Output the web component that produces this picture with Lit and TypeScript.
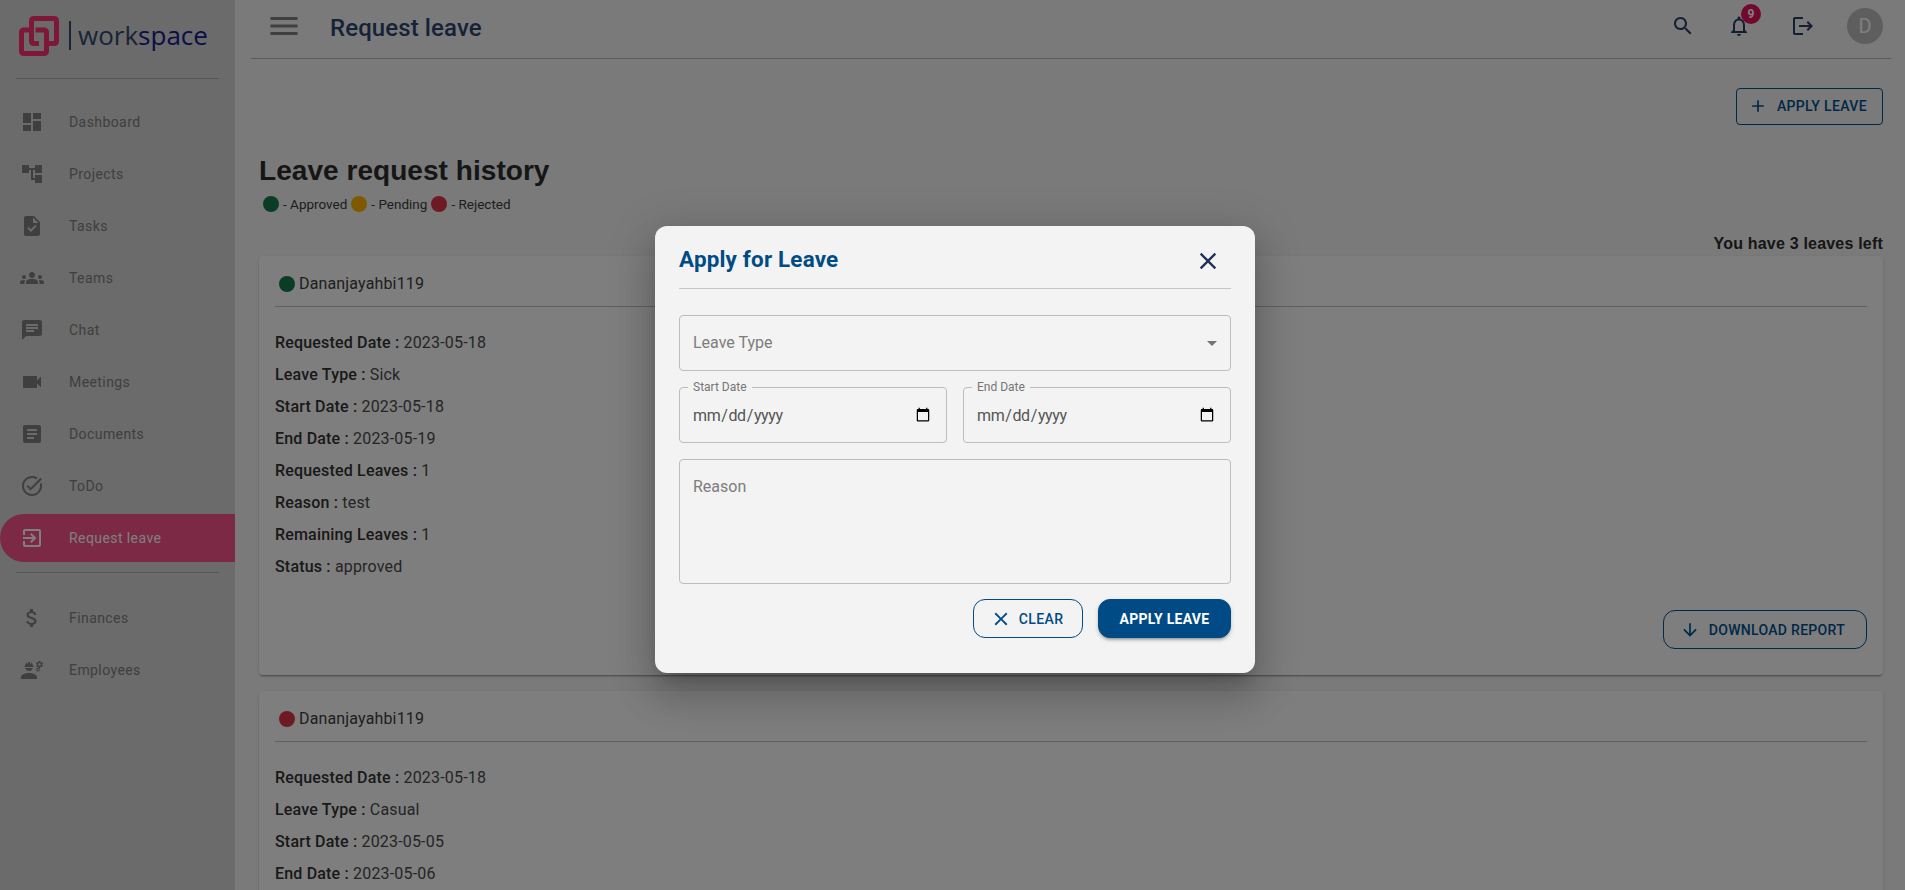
import { LitElement, css, html, svg } from "lit";
import { customElement } from "lit/decorators.js";

const ICONS: Record<string, string> = {
  dashboard: "M3 13h8V3H3v10zm0 8h8v-6H3v6zm10 0h8V11h-8v10zm0-18v6h8V3h-8z",
  projects: "M22 11V3h-7v3H9V3H2v8h7V8h2v10h4v3h7v-8h-7v3h-2V8h2v3z",
  tasks: "M14 2H6c-1.1 0-1.99.9-1.99 2L4 20c0 1.1.89 2 1.99 2H18c1.1 0 2-.9 2-2V8l-6-6zm-3.06 16L7.4 14.46l1.41-1.41 2.12 2.12 4.24-4.24 1.41 1.41L10.94 18zM13 9V3.5L18.5 9H13z",
  teams: "M12 12.75c1.63 0 3.07.39 4.24.9 1.08.48 1.76 1.56 1.76 2.73V18H6v-1.61c0-1.18.68-2.26 1.76-2.73 1.17-.52 2.61-.91 4.24-.91zM4 13c1.1 0 2-.9 2-2s-.9-2-2-2-2 .9-2 2 .9 2 2 2zm1.13 1.1c-.37-.06-.74-.1-1.13-.1-.99 0-1.93.21-2.78.58C.48 14.9 0 15.62 0 16.43V18h4.5v-1.61c0-.83.23-1.61.63-2.29zM20 13c1.1 0 2-.9 2-2s-.9-2-2-2-2 .9-2 2 .9 2 2 2zm4 3.43c0-.81-.48-1.53-1.22-1.85-.85-.37-1.79-.58-2.78-.58-.39 0-.76.04-1.13.1.4.68.63 1.46.63 2.29V18H24v-1.57zM12 6c1.66 0 3 1.34 3 3s-1.34 3-3 3-3-1.34-3-3 1.34-3 3-3z",
  chat: "M20 2H4c-1.1 0-1.99.9-1.99 2L2 22l4-4h14c1.1 0 2-.9 2-2V4c0-1.1-.9-2-2-2zM6 9h12v2H6V9zm8 5H6v-2h8v2zm4-6H6V6h12v2z",
  meetings: "M17 10.5V7c0-.55-.45-1-1-1H4c-.55 0-1 .45-1 1v10c0 .55.45 1 1 1h12c.55 0 1-.45 1-1v-3.5l4 4v-11l-4 4z",
  documents: "M19 3H5c-1.1 0-2 .9-2 2v14c0 1.1.9 2 2 2h14c1.1 0 2-.9 2-2V5c0-1.1-.9-2-2-2zm-5 14H7v-2h7v2zm3-4H7v-2h10v2zm0-4H7V7h10v2z",
  todo: "M22 5.18 10.59 16.6l-4.24-4.24 1.41-1.41 2.83 2.83 10-10L22 5.18zm-2.21 5.04c.13.57.21 1.17.21 1.78 0 4.42-3.58 8-8 8s-8-3.58-8-8 3.58-8 8-8c1.58 0 3.04.46 4.28 1.25l1.44-1.44C16.1 2.67 14.13 2 12 2 6.48 2 2 6.48 2 12s4.48 10 10 10 10-4.48 10-10c0-1.19-.22-2.33-.6-3.39l-1.61 1.61z",
  leave: "M10.09 15.59L11.5 17l5-5-5-5-1.41 1.41L12.67 11H3v2h9.67l-2.58 2.59zM19 3H5c-1.11 0-2 .9-2 2v4h2V5h14v14H5v-4H3v4c0 1.1.89 2 2 2h14c1.1 0 2-.9 2-2V5c0-1.1-.9-2-2-2z",
  finances: "M11.8 10.9c-2.27-.59-3-1.2-3-2.15 0-1.09 1.01-1.85 2.7-1.85 1.78 0 2.44.85 2.5 2.1h2.21c-.07-1.72-1.12-3.3-3.21-3.81V3h-3v2.16c-1.94.42-3.5 1.68-3.5 3.61 0 2.31 1.91 3.46 4.7 4.13 2.5.6 3 1.48 3 2.41 0 .69-.49 1.79-2.7 1.79-2.06 0-2.87-.92-2.98-2.1h-2.2c.12 2.19 1.76 3.42 3.68 3.83V21h3v-2.15c1.95-.37 3.5-1.5 3.5-3.55 0-2.84-2.43-3.81-4.7-4.4z",
  employees: "M9 15c-2.67 0-8 1.34-8 4v2h16v-2c0-2.66-5.33-4-8-4zm13.1-8.16c.01-.11.02-.22.02-.34 0-.12-.01-.23-.03-.34l.74-.58c.07-.05.08-.15.04-.22l-.7-1.21c-.04-.08-.14-.1-.21-.08l-.86.35c-.18-.14-.38-.25-.59-.34l-.13-.93c-.01-.08-.08-.15-.17-.15h-1.4c-.09 0-.16.06-.17.15l-.13.93c-.21.09-.41.21-.59.34l-.87-.35c-.08-.03-.17 0-.21.08l-.7 1.21c-.04.08-.03.17.04.22l.74.58c-.02.11-.03.23-.03.34 0 .11.01.23.03.34l-.74.58c-.07.05-.08.15-.04.22l.7 1.21c.04.08.14.1.21.08l.87-.35c.18.14.38.25.59.34l.13.93c.01.09.08.15.17.15h1.4c.09 0 .16-.06.17-.15l.13-.93c.21-.09.41-.21.59-.34l.86.35c.08.03.17 0 .21-.08l.7-1.21c.04-.08.03-.17-.04-.22l-.73-.58zm-2.6.91c-.69 0-1.25-.56-1.25-1.25s.56-1.25 1.25-1.25 1.25.56 1.25 1.25-.56 1.25-1.25 1.25zM4.74 9h8.53c.27 0 .49-.22.49-.49v-.02c0-.27-.22-.49-.49-.49H13c0-1.48-.81-2.75-2-3.45v.95c0 .28-.22.5-.5.5s-.5-.22-.5-.5V4.14C9.68 4.06 9.35 4 9 4s-.68.06-1 .14V5.5c0 .28-.22.5-.5.5S7 5.78 7 5.5v-.95C5.81 5.25 5 6.52 5 8h-.26c-.27 0-.49.22-.49.49v.03c0 .26.22.48.49.48zM9 13c1.86 0 3.41-1.28 3.86-3H5.14c.45 1.72 2 3 3.86 3zM18 9.6a1.9 1.9 0 1 1-.01 0zm0 1.1a.8.8 0 1 0 .01 0z",
  menu: "M3 18h18v-2H3v2zm0-5h18v-2H3v2zm0-7v2h18V6H3z",
  search: "M15.5 14h-.79l-.28-.27C15.41 12.59 16 11.11 16 9.5 16 5.91 13.09 3 9.5 3S3 5.91 3 9.5 5.91 16 9.5 16c1.61 0 3.09-.59 4.23-1.57l.27.28v.79l5 4.99L20.49 19l-4.99-5zm-6 0C7.01 14 5 11.99 5 9.5S7.01 5 9.5 5 14 7.01 14 9.5 11.99 14 9.5 14z",
  bell: "M12 22c1.1 0 2-.9 2-2h-4c0 1.1.9 2 2 2zm6-6v-5c0-3.07-1.63-5.64-4.5-6.32V4c0-.83-.67-1.5-1.5-1.5s-1.5.67-1.5 1.5v.68C7.64 5.36 6 7.92 6 11v5l-2 2v1h16v-1l-2-2zm-2 1H8v-6c0-2.48 1.51-4.5 4-4.5s4 2.02 4 4.5v6z",
  logout: "M17 7l-1.41 1.41L18.17 11H8v2h10.17l-2.58 2.58L17 17l5-5zM4 5h8V3H4c-1.1 0-2 .9-2 2v14c0 1.1.9 2 2 2h8v-2H4V5z",
  add: "M19 13h-6v6h-2v-6H5v-2h6V5h2v6h6v2z",
  close: "M19 6.41L17.59 5 12 10.59 6.41 5 5 6.41 10.59 12 5 17.59 6.41 19 12 13.41 17.59 19 19 17.59 13.41 12z",
  down: "M20 12l-1.41-1.41L13 16.17V4h-2v12.17l-5.58-5.59L4 12l8 8 8-8z",
  caret: "M7 10l5 5 5-5z",
};

const icon = (name: string, size = 24) => html`<svg width=${size} height=${size} viewBox="0 0 24 24" fill="currentColor" aria-hidden="true">${svg`<path d=${ICONS[name]}></path>`}</svg>`;

const NAV_TOP = [
  ["dashboard", "Dashboard"],
  ["projects", "Projects"],
  ["tasks", "Tasks"],
  ["teams", "Teams"],
  ["chat", "Chat"],
  ["meetings", "Meetings"],
  ["documents", "Documents"],
  ["todo", "ToDo"],
];

const NAV_BOTTOM = [
  ["finances", "Finances"],
  ["employees", "Employees"],
];

const REQUESTS = [
  {
    status: "green",
    rows: [
      ["Requested Date", "2023-05-18"],
      ["Leave Type", "Sick"],
      ["Start Date", "2023-05-18"],
      ["End Date", "2023-05-19"],
      ["Requested Leaves", "1"],
      ["Reason", "test"],
      ["Remaining Leaves", "1"],
      ["Status", "approved"],
    ],
  },
  {
    status: "red",
    rows: [
      ["Requested Date", "2023-05-18"],
      ["Leave Type", "Casual"],
      ["Start Date", "2023-05-05"],
      ["End Date", "2023-05-06"],
    ],
  },
];

@customElement("app-root")
export class AppRoot extends LitElement {
  static styles = css`
    :host {
      display: block;
      height: 100vh;
      overflow: hidden;
      position: relative;
      font-family: Roboto, "Liberation Sans", sans-serif;
      color: #3c3c3c;
      background: #f4f4f4;
    }

    .layout {
      display: flex;
      height: 100%;
    }

    /* sidebar */
    .sidebar {
      flex: 0 0 235px;
      background: #d6d6d6;
      display: flex;
      flex-direction: column;
    }

    .logo {
      display: flex;
      align-items: center;
      gap: 10px;
      height: 79px;
      padding: 0 0 7px 3px;
      box-sizing: border-box;
      border-bottom: 1px solid #aaa;
      margin: 0 16px;
    }

    .logo svg {
      flex: none;
    }

    .logo-text {
      font-family: "Open Sans", sans-serif;
      font-size: 26px;
      line-height: 29px;
      color: #34496e;
      border-left: 2px solid #34496e;
      padding-left: 7px;
      white-space: nowrap;
    }

    .logo-text b {
      font-weight: 400;
      color: #1a1a8c;
    }

    .nav {
      display: flex;
      flex-direction: column;
      gap: 4px;
      margin-top: 19px;
    }

    .nav + .rule {
      margin: 10px 16px 0;
      border-top: 1px solid #aaa;
    }

    .nav.bottom {
      margin-top: 21px;
    }

    .nav-item {
      display: flex;
      align-items: center;
      height: 48px;
      padding-left: 20px;
      gap: 25px;
      color: #7e7e7e;
      font-size: 14px;
      letter-spacing: 0.42px;
      border-radius: 24px 0 0 24px;
    }

    .nav-item.active {
      background: #f65288;
      color: #fff;
    }

    /* main column */
    .main {
      flex: 1;
      min-width: 0;
      display: flex;
      flex-direction: column;
    }

    .topbar {
      display: flex;
      align-items: center;
      height: 59px;
      flex: none;
      margin: 0 14px 0 16px;
      padding: 0 8px 6px 15px;
      border-bottom: 1px solid #b4b4b4;
      box-sizing: border-box;
      color: #2a3c66;
    }

    .burger {
      color: #808080;
      display: flex;
      margin-right: 28px;
    }

    .topbar h1 {
      margin: 0 auto 0 0;
      padding-top: 4px;
      font-size: 24px;
      font-weight: 500;
      letter-spacing: 0.1px;
      color: #2f4470;
    }

    .top-icons {
      display: flex;
      align-items: center;
      gap: 32px;
    }

    .bell {
      position: relative;
      display: flex;
      margin-right: 8px;
    }

    .badge {
      position: absolute;
      top: -10px;
      right: -10px;
      width: 20px;
      height: 20px;
      border-radius: 50%;
      background: #e6105e;
      color: #fff;
      font-size: 12px;
      font-weight: 700;
      display: flex;
      align-items: center;
      justify-content: center;
    }

    .avatar {
      width: 36px;
      height: 36px;
      border-radius: 50%;
      background: #bdbdbd;
      color: #fff;
      font-size: 20px;
      display: flex;
      align-items: center;
      justify-content: center;
    }

    .content {
      padding: 29px 22px 0 24px;
    }

    .btn {
      display: inline-flex;
      align-items: center;
      box-sizing: border-box;
      font: 500 14px Roboto, sans-serif;
      color: #00508f;
      background: transparent;
      border: 1px solid #00508f;
      border-radius: 4px;
      padding: 0;
    }

    .actions {
      display: flex;
      justify-content: flex-end;
    }

    .apply-top {
      width: 147px;
      height: 37px;
      gap: 9px;
      justify-content: flex-end;
      padding: 0 15px 2px 0;
      letter-spacing: 0.36px;
    }

    h2 {
      margin: 27px 0 0;
      font: 700 28px/38px "Liberation Sans", Arial, sans-serif;
      letter-spacing: 0.05px;
      color: #2c2c2c;
    }

    .legend {
      display: flex;
      align-items: center;
      gap: 4px;
      font-size: 13.5px;
      line-height: 16px;
      margin: 6px 0 0 4px;
    }

    .dot {
      width: 16px;
      height: 16px;
      border-radius: 50%;
      flex: none;
      display: inline-block;
    }

    .dot.green { background: #17794c; }
    .dot.amber { background: #ffb300; }
    .dot.red { background: #dc3545; }

    .left {
      text-align: right;
      margin: 22px 0 3px;
      font: 700 16px/19px "Liberation Sans", Arial, sans-serif;
      letter-spacing: 0.2px;
      color: #2c2c2c;
    }

    .card {
      background: #fcfcfc;
      border-radius: 4px;
      padding: 16px 16px 26px;
      margin-bottom: 16px;
      box-shadow: 0 2px 2px -1px rgba(0, 0, 0, 0.35), 0 1px 3px rgba(0, 0, 0, 0.12);
    }

    .card-head {
      display: flex;
      align-items: flex-start;
      gap: 4px;
      height: 35px;
      padding: 4px 4px 0;
      box-sizing: border-box;
      border-bottom: 1px solid #c0c0c0;
      font-size: 16px;
      line-height: 16px;
      letter-spacing: 0.15px;
    }

    .rows {
      margin-top: 20px;
    }

    .row {
      height: 32px;
      line-height: 32px;
      font-size: 16px;
      letter-spacing: 0.18px;
      color: #4a4a4a;
    }

    .row b {
      font-weight: 500;
      color: #333;
    }

    .download {
      display: flex;
      justify-content: flex-end;
      margin-top: 27px;
    }

    .download .btn {
      width: 204px;
      height: 39px;
      border-radius: 12px;
      gap: 9px;
      justify-content: flex-end;
      padding-right: 21px;
      letter-spacing: 0.3px;
    }

    /* modal */
    .overlay {
      position: absolute;
      inset: 0;
      background: rgba(0, 0, 0, 0.5);
    }

    .dialog {
      position: absolute;
      left: 655px;
      top: 226px;
      width: 600px;
      height: 447px;
      box-sizing: border-box;
      padding: 0 24px;
      background: #f3f3f3;
      border-radius: 12px;
      box-shadow: 0 11px 15px -7px rgba(0, 0, 0, 0.2), 0 24px 38px 3px rgba(0, 0, 0, 0.14), 0 9px 46px 8px rgba(0, 0, 0, 0.12);
      display: flex;
      flex-direction: column;
    }

    .dialog-head {
      display: flex;
      align-items: center;
      justify-content: space-between;
      height: 63px;
      flex: none;
      box-sizing: border-box;
      padding-top: 4px;
      border-bottom: 1px solid #c4c4c4;
    }

    .dialog-head h3 {
      margin: 0;
      font-size: 22.4px;
      font-weight: 700;
      letter-spacing: 0.2px;
      color: #004b85;
    }

    .dialog-head svg {
      color: #1f3157;
      margin: 4px 9px 0 0;
    }

    .field {
      box-sizing: border-box;
      border: 1px solid #bdbdbd;
      border-radius: 4px;
    }

    .select {
      margin-top: 26px;
      height: 56px;
      display: flex;
      align-items: center;
      justify-content: space-between;
      padding: 0 6px 2px 13px;
      color: #7d7d7d;
      font-size: 16px;
    }

    .select svg {
      color: #757575;
      margin-top: 2px;
    }

    .dates {
      display: grid;
      grid-template-columns: 1fr 1fr;
      gap: 16px;
      margin-top: 16px;
    }

    .date {
      position: relative;
      height: 56px;
    }

    .date label {
      position: absolute;
      left: 8px;
      top: -8px;
      padding: 0 5px;
      background: #f3f3f3;
      color: #757575;
      font-size: 12px;
      line-height: 14px;
    }

    .date input {
      width: 100%;
      height: 100%;
      box-sizing: border-box;
      border: none;
      outline: none;
      background: transparent;
      padding: 0 13px 0 12px;
      font: 400 16px Roboto, sans-serif;
      letter-spacing: -0.4px;
      color: #555;
    }

    textarea {
      display: block;
      width: 100%;
      height: 125px;
      margin-top: 16px;
      padding: 16px 13px;
      resize: none;
      outline: none;
      background: transparent;
      font: 400 16px/1.4 Roboto, sans-serif;
      color: #333;
    }

    textarea::placeholder {
      color: #7d7d7d;
      opacity: 1;
    }

    .dialog-actions {
      display: flex;
      justify-content: flex-end;
      gap: 15px;
      margin-top: 15px;
    }

    .dialog-actions .btn {
      height: 39px;
      border-radius: 12px;
      justify-content: center;
    }

    .clear {
      width: 110px;
      gap: 7px;
      padding-right: 3px;
      color: #004b85;
      border-color: #004b85;
      letter-spacing: 0.4px;
    }

    .submit {
      width: 133px;
      background: #004b85;
      border-color: #004b85;
      color: #fff;
      font-weight: 700;
      letter-spacing: 0.3px;
      box-shadow: 0 3px 3px -2px rgba(0, 0, 0, 0.3), 0 2px 4px rgba(0, 0, 0, 0.2);
    }
  `;

  private renderLogo() {
    return html`<svg width="40" height="40" viewBox="5 5 40 40" fill="none" stroke="#ff2f73" stroke-width="5" stroke-linejoin="round" aria-hidden="true">
      <path d="M25 32.5H19.5a2 2 0 0 1-2-2V9.5a2 2 0 0 1 2-2H40.5a2 2 0 0 1 2 2V30.5a2 2 0 0 1-2 2H35"></path>
      <path d="M15 19H9.5a2 2 0 0 0-2 2V40.5a2 2 0 0 0 2 2H30.5a2 2 0 0 0 2-2V21a2 2 0 0 0-2-2H21.5"></path>
    </svg>`;
  }

  private renderNavItem([name, label]: string[], active = false) {
    return html`<div class="nav-item ${active ? "active" : ""}">${icon(name)}<span>${label}</span></div>`;
  }

  private renderRequest(request: { status: string; rows: string[][] }, withDownload: boolean) {
    return html`<section class="card">
      <div class="card-head"><span class="dot ${request.status}"></span>Dananjayahbi119</div>
      <div class="rows">
        ${request.rows.map(([key, value]) => html`<div class="row"><b>${key} :</b> ${value}</div>`)}
      </div>
      ${withDownload
        ? html`<div class="download"><button class="btn">${icon("down", 20)}DOWNLOAD REPORT</button></div>`
        : ""}
    </section>`;
  }

  private renderDialog() {
    return html`<div class="overlay">
      <div class="dialog">
        <div class="dialog-head">
          <h3>Apply for Leave</h3>
          ${icon("close", 28)}
        </div>
        <div class="field select"><span>Leave Type</span>${icon("caret")}</div>
        <div class="dates">
          <div class="field date"><label>Start Date</label><input type="date" /></div>
          <div class="field date"><label>End Date</label><input type="date" /></div>
        </div>
        <textarea class="field" placeholder="Reason"></textarea>
        <div class="dialog-actions">
          <button class="btn clear">${icon("close", 22)}CLEAR</button>
          <button class="btn submit">APPLY LEAVE</button>
        </div>
      </div>
    </div>`;
  }

  render() {
    return html`
      <div class="layout">
        <aside class="sidebar">
          <div class="logo">
            ${this.renderLogo()}
            <span class="logo-text">work<b>space</b></span>
          </div>
          <nav class="nav">
            ${NAV_TOP.map((item) => this.renderNavItem(item))}
            ${this.renderNavItem(["leave", "Request leave"], true)}
          </nav>
          <div class="rule"></div>
          <nav class="nav bottom">${NAV_BOTTOM.map((item) => this.renderNavItem(item))}</nav>
        </aside>
        <div class="main">
          <header class="topbar">
            <span class="burger">${icon("menu", 36)}</span>
            <h1>Request leave</h1>
            <div class="top-icons">
              ${icon("search")}
              <span class="bell">${icon("bell")}<span class="badge">9</span></span>
              ${icon("logout")}
              <span class="avatar">D</span>
            </div>
          </header>
          <main class="content">
            <div class="actions"><button class="btn apply-top">${icon("add", 20)}APPLY LEAVE</button></div>
            <h2>Leave request history</h2>
            <div class="legend">
              <span class="dot green"></span>- Approved
              <span class="dot amber"></span>- Pending
              <span class="dot red"></span>- Rejected
            </div>
            <div class="left">You have 3 leaves left</div>
            ${REQUESTS.map((request, i) => this.renderRequest(request, i === 0))}
          </main>
        </div>
      </div>
      ${this.renderDialog()}
    `;
  }
}
